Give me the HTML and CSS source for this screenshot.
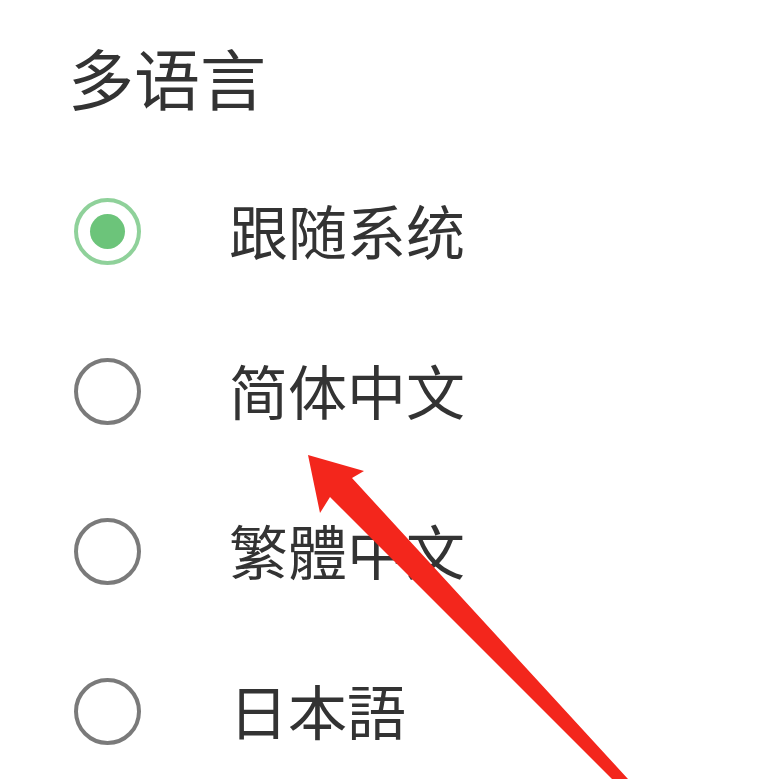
FILE: index.html
```html
<!DOCTYPE html>
<html lang="zh-CN">
<head>
    <meta charset="UTF-8">
    <meta name="viewport" content="width=device-width, initial-scale=1.0">
    <title>多语言</title>
    <link rel="stylesheet" href="styles.css">
</head>
<body>
    <div class="page">
        <h1 class="title">多语言</h1>

        <div class="options">
            <div class="option">
                <span class="radio checked"></span>
                <span class="label">跟随系统</span>
            </div>
            <div class="option">
                <span class="radio"></span>
                <span class="label">简体中文</span>
            </div>
            <div class="option">
                <span class="radio"></span>
                <span class="label" lang="zh-TW">繁體中文</span>
            </div>
            <div class="option">
                <span class="radio"></span>
                <span class="label" lang="ja">日本語</span>
            </div>
        </div>

        <!-- annotation arrow drawn over the list -->
        <svg class="arrow" width="759" height="779" viewBox="0 0 759 779">
            <polygon points="308,455 364,471 352,478 628,779 612,779 330,497 320,513" fill="#f3261c"/>
        </svg>
    </div>
</body>
</html>
```

FILE: styles.css
```css
body {
    margin: 0;
    padding: 0;
    background-color: #fff;
    font-family: "Noto Sans CJK SC", "Noto Sans CJK TC", "Noto Sans CJK JP", sans-serif;
    color: #333;
}

.page {
    position: relative;
    width: 759px;
    height: 779px;
    overflow: hidden;
}

.title {
    margin: 0;
    padding: 40px 0 0 68px;
    font-size: 66px;
    font-weight: normal;
    line-height: 72px;
    color: #333;
}

.options {
    margin-top: 39px;
}

.option {
    display: flex;
    align-items: center;
    height: 160px;
    padding-left: 74px;
}

.radio {
    width: 59px;
    height: 59px;
    border: 4px solid #7a7a7a;
    border-radius: 50%;
    position: relative;
    flex-shrink: 0;
}

.radio.checked {
    border-color: #8fd19a;
}

.radio.checked::after {
    content: "";
    position: absolute;
    top: 12px;
    left: 12px;
    width: 35px;
    height: 35px;
    border-radius: 50%;
    background-color: #6cc47a;
}

.label {
    margin-left: 88px;
    margin-top: -3px;
    font-size: 59px;
    line-height: 1;
    color: #333;
}

.arrow {
    position: absolute;
    top: 0;
    left: 0;
    pointer-events: none;
}
```
